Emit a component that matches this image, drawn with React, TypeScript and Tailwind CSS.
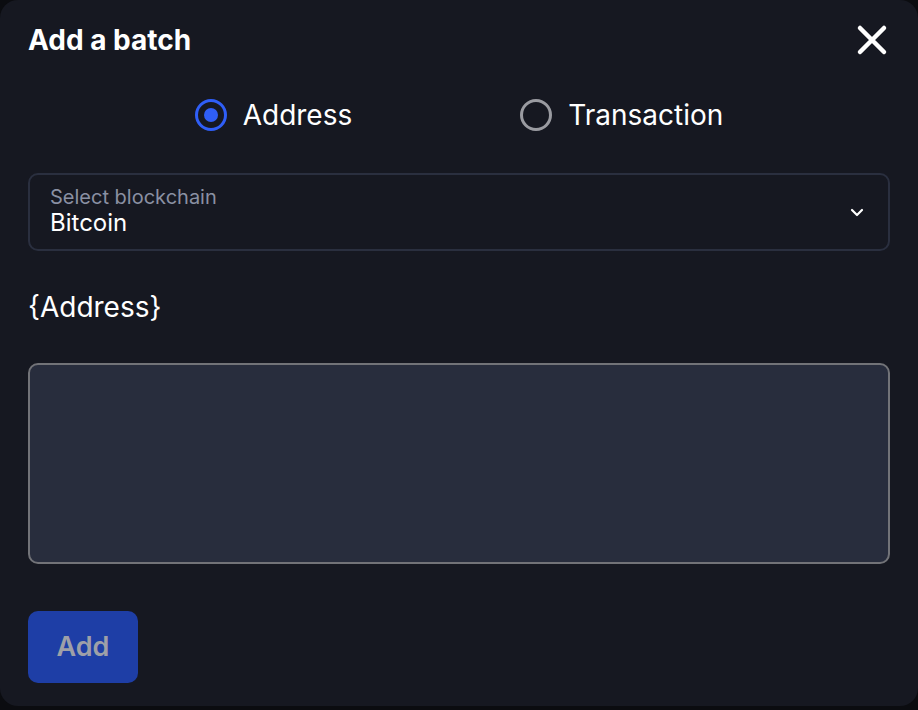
import { useState } from 'react'

function Radio({ checked, label, onClick }: { checked: boolean; label: string; onClick: () => void }) {
  return (
    <button type="button" onClick={onClick} className="flex items-center gap-4">
      <span
        className={
          checked
            ? 'w-8 h-8 rounded-full border-[3px] border-[#2f5ef6] grid place-items-center'
            : 'w-8 h-8 rounded-full border-[3px] border-[#9a9ba1] grid place-items-center'
        }
      >
        {checked && <span className="w-[14px] h-[14px] rounded-full bg-[#2f5ef6]" />}
      </span>
      <span className="text-[28px] leading-none text-white">{label}</span>
    </button>
  )
}

export default function App() {
  const [mode, setMode] = useState<'address' | 'tx'>('address')

  return (
    <div className="w-[918px] h-[710px] bg-[#0b0c10] font-['Inter',sans-serif]">
      <div className="w-[918px] h-[706px] bg-[#161821] rounded-[18px] px-7 pt-6 flex flex-col">
        <div className="flex items-center justify-between h-8">
          <h1 className="text-[28px] leading-none font-bold text-white">Add a batch</h1>
          <button type="button" className="w-8 h-8 mr-[2px] grid place-items-center text-white">
            <svg width="32" height="32" viewBox="0 0 32 32" fill="none" stroke="currentColor" strokeWidth="4.5" strokeLinecap="round">
              <path d="M4 4L28 28M28 4L4 28" />
            </svg>
          </button>
        </div>

        <div className="flex justify-center gap-[168px] mt-[43px]">
          <Radio checked={mode === 'address'} label="Address" onClick={() => setMode('address')} />
          <Radio checked={mode === 'tx'} label="Transaction" onClick={() => setMode('tx')} />
        </div>

        <div className="mt-[42px] h-[78px] border-2 border-[#2a2f3f] rounded-[10px] pl-5 pr-6 flex items-center justify-between">
          <div className="flex flex-col">
            <span className="text-[20px] leading-[22px] text-[#8a90a3]">Select blockchain</span>
            <span className="text-[24px] leading-[30px] text-white">Bitcoin</span>
          </div>
          <svg width="14" height="9" viewBox="0 0 14 9" fill="none" stroke="white" strokeWidth="2.2" strokeLinecap="round" strokeLinejoin="round">
            <path d="M2 2l5 5 5-5" />
          </svg>
        </div>

        <p className="mt-[40px] text-[28px] leading-[32px] text-white">{'{Address}'}</p>

        <textarea className="mt-[40px] h-[201px] w-full resize-none bg-[#282d3d] border-2 border-[#727378] rounded-[10px] outline-none text-white p-3" />

        <button type="button" className="mt-[47px] w-[110px] h-[72px] rounded-[10px] bg-[#1e3ea6] text-[#9ea0a8] text-[27px] font-semibold">
          Add
        </button>
      </div>
    </div>
  )
}
